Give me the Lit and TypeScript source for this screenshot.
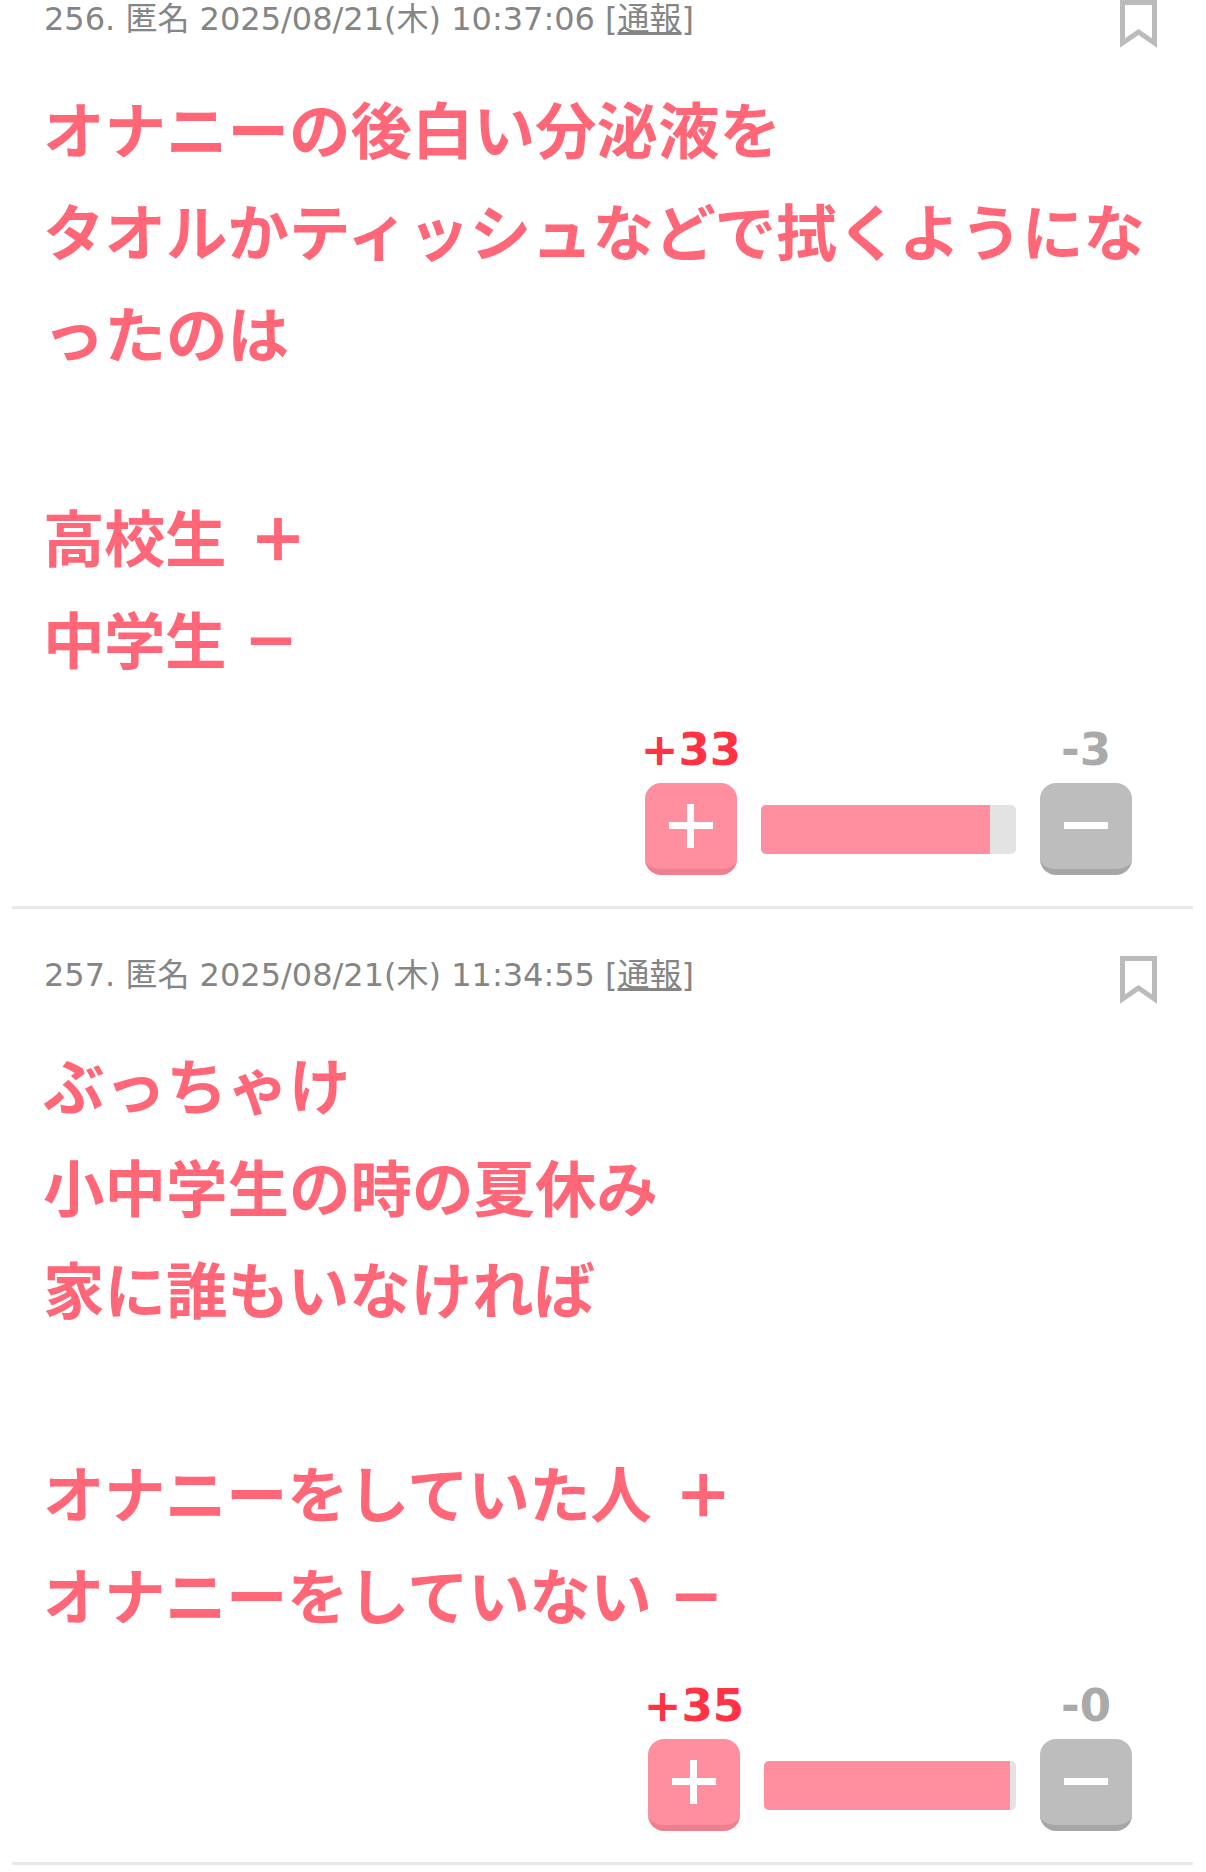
import { LitElement, html, css } from 'lit';
import { customElement } from 'lit/decorators.js';

type Post = {
  no: number;
  date: string;
  lines: string[];
  plus: number;
  minus: number;
  barWidth: number;
  ratio: number;
};

const POSTS: Post[] = [
  {
    no: 256,
    date: '2025/08/21(木) 10:37:06',
    lines: [
      'オナニーの後白い分泌液を',
      'タオルかティッシュなどで拭くようにな',
      'ったのは',
      '',
      '高校生 ＋',
      '中学生 －',
    ],
    plus: 33,
    minus: 3,
    barWidth: 255,
    ratio: 89.7,
  },
  {
    no: 257,
    date: '2025/08/21(木) 11:34:55',
    lines: [
      'ぶっちゃけ',
      '小中学生の時の夏休み',
      '家に誰もいなければ',
      '',
      'オナニーをしていた人 ＋',
      'オナニーをしていない －',
    ],
    plus: 35,
    minus: 0,
    barWidth: 252,
    ratio: 97.6,
  },
];

@customElement('app-root')
export class AppRoot extends LitElement {
  render() {
    return html`${POSTS.map(post => this.renderPost(post))}`;
  }

  private renderLine(line: string) {
    const sign = line.slice(-1);
    if (sign === '＋' || sign === '－') {
      const cls = sign === '＋' ? 'sign plus' : 'sign minus';
      return html`<div class="line signed">${line.slice(0, -2)}<span class=${cls}>${sign}</span></div>`;
    }
    return html`<div class="line">${line}</div>`;
  }

  private renderPost(post: Post) {
    return html`
      <article class="post">
        <header class="head">
          <span class="meta"
            >${post.no}. 匿名 ${post.date} [<a class="report">通報</a>]</span
          >
          <svg class="mark" viewBox="0 0 37 48" width="37" height="48">
            <path
              d="M2.5 2.5H34.5V43L18.5 32L2.5 43Z"
              fill="none"
              stroke="#bbbbbb"
              stroke-width="5"
            />
          </svg>
        </header>
        <div class="body">${post.lines.map(line => this.renderLine(line))}</div>
        <div class="votes">
          <div class="vote up">
            <span class="count">+${post.plus}</span>
            <button class="btn"><i class="bar-h"></i><i class="bar-v"></i></button>
          </div>
          <div class="meter" style="width:${post.barWidth}px">
            <div class="fill" style="width:${post.ratio}%"></div>
          </div>
          <div class="vote down">
            <span class="count">-${post.minus}</span>
            <button class="btn"><i class="bar-h"></i></button>
          </div>
        </div>
      </article>
    `;
  }

  static styles = css`
    :host {
      display: block;
      background: #fff;
      height: 1872px;
      overflow: hidden;
      font-family: 'DejaVu Sans', 'Noto Sans CJK JP', sans-serif;
    }

    .post {
      margin: 0 13px 0 12px;
      padding-top: 47px;
      border-bottom: 3px solid #e8e8e8;
      box-sizing: border-box;
      height: 956px;
    }

    .post:first-child {
      margin-top: -47px;
    }

    .head {
      display: flex;
      justify-content: space-between;
      align-items: flex-start;
      height: 48px;
      padding: 0 36px 0 32px;
    }

    .meta {
      margin-top: -1px;
      font-size: 32px;
      line-height: 40px;
      color: #858585;
      white-space: nowrap;
    }

    .report {
      text-decoration: underline;
    }

    .mark {
      display: block;
      flex: none;
    }

    .body {
      margin-top: 29px;
      padding-left: 31px;
      font-size: 61.5px;
      line-height: 102px;
      font-weight: 700;
      color: #ff6677;
      font-family: 'Noto Sans CJK JP', sans-serif;
    }

    .line {
      height: 102px;
      white-space: pre;
    }

    .line.signed {
      letter-spacing: -0.5px;
    }

    .sign {
      position: relative;
      top: -2px;
      font-size: 56px;
      -webkit-text-stroke: 2px #ff6677;
    }

    .sign.plus {
      margin-left: 24px;
    }

    .sign.minus {
      margin-left: 18px;
      font-size: 54px;
    }

    .votes {
      display: flex;
      justify-content: flex-end;
      align-items: flex-end;
      gap: 24px;
      margin-top: 39px;
      padding-right: 61px;
    }

    .vote {
      display: flex;
      flex-direction: column;
      align-items: center;
      gap: 11px;
      width: 92px;
    }

    .count {
      margin: 0 -10px;
      font-size: 45px;
      line-height: 44px;
      font-weight: 700;
      white-space: nowrap;
    }

    .up .count {
      color: #ff3344;
    }

    .down .count {
      color: #aaaaaa;
    }

    .btn {
      position: relative;
      display: block;
      width: 92px;
      height: 92px;
      padding: 0;
      border: 0;
      border-bottom: 6px solid;
      border-radius: 16px;
      box-sizing: border-box;
    }

    .up .btn {
      background: #ff8e9e;
      border-color: #ee7f8f;
    }

    .down .btn {
      background: #bdbdbd;
      border-color: #a6a6a6;
    }

    .bar-h,
    .bar-v {
      position: absolute;
      left: 50%;
      top: 50%;
      background: #fff;
    }

    .bar-h {
      width: 44px;
      height: 7px;
      margin: -4px 0 0 -22px;
    }

    .bar-v {
      width: 7px;
      height: 44px;
      margin: -22px 0 0 -4px;
    }

    .meter {
      height: 49px;
      margin-bottom: 21px;
      background: #e3e3e3;
      border-radius: 5px;
      overflow: hidden;
    }

    .fill {
      height: 100%;
      background: #ff8e9e;
    }
  `;
}

declare global {
  interface HTMLElementTagNameMap {
    'app-root': AppRoot;
  }
}
